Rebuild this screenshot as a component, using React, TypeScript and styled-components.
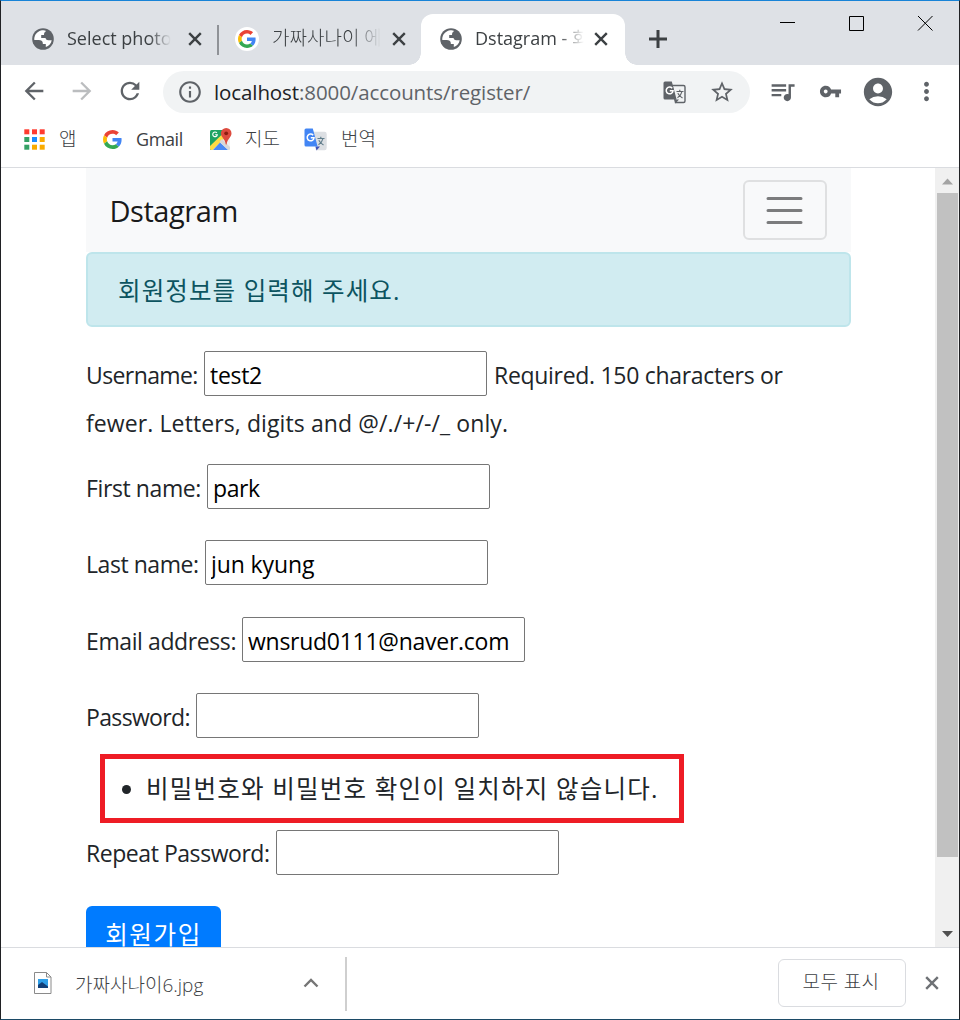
import React from 'react';
import styled, { createGlobalStyle } from 'styled-components';
import {
  MdArrowBack, MdArrowForward, MdRefresh, MdInfoOutline, MdStarBorder, MdVpnKey,
  MdAccountCircle, MdMoreVert, MdQueueMusic,
} from 'react-icons/md';

const Global = createGlobalStyle`
  *, *::before, *::after { box-sizing: border-box; }
  body { margin: 0; background: #fff; }
  input, button { font: inherit; }
`;

const latin = `'Open Sans', 'Noto Sans CJK KR', sans-serif`;

const Window = styled.div`
  width: 960px;
  height: 1020px;
  display: flex;
  flex-direction: column;
  overflow: hidden;
  background: #fff;
  border: 1px solid #202124;
  border-top-color: #1883d7;
  border-bottom-color: #1c4a66;
  font-family: ${latin};
`;

const Label = styled.span<{ $size: number; $ls?: number; $color?: string; $dy?: number; $weight?: number }>`
  display: inline-block;
  font-size: ${p => p.$size}px;
  letter-spacing: ${p => p.$ls ?? 0}px;
  color: ${p => p.$color ?? '#3c4043'};
  font-weight: ${p => p.$weight ?? 400};
  line-height: 30px;
  white-space: pre;
  transform: translateY(${p => p.$dy ?? 0}px);
`;

/* tab strip */
const TabStrip = styled.div`
  display: flex;
  height: 64px;
  background: #dee1e6;
  flex: none;
`;
const Tab = styled.div<{ $w: number; $active?: boolean; $pad: number }>`
  position: relative;
  display: flex;
  align-items: center;
  width: ${p => p.$w}px;
  height: 51px;
  margin-top: 13px;
  padding-left: ${p => p.$pad}px;
  padding-bottom: 1px;
  background: ${p => (p.$active ? '#fff' : 'transparent')};
  border-radius: 12px 12px 0 0;
  &::before, &::after {
    content: '';
    display: ${p => (p.$active ? 'block' : 'none')};
    position: absolute;
    bottom: 0;
    width: 12px;
    height: 12px;
  }
  &::before { left: -12px; background: radial-gradient(circle at 0 0, transparent 11.5px, #fff 12px); }
  &::after { right: -12px; background: radial-gradient(circle at 100% 0, transparent 11.5px, #fff 12px); }
`;
const TabTitle = styled.div<{ $w: number; $ml: number; $fade: number }>`
  width: ${p => p.$w}px;
  margin-left: ${p => p.$ml}px;
  height: 30px;
  overflow: hidden;
  mask-image: linear-gradient(to right, #000 calc(100% - ${p => p.$fade}px), transparent);
`;
const CloseIcon = styled.svg<{ $ml: number }>`
  flex: none;
  margin-left: ${p => p.$ml}px;
`;
const Divider = styled.div`
  width: 2px;
  height: 30px;
  margin-top: 24px;
  background: #8f9297;
`;
const White = styled.div`
  display: flex;
  align-items: center;
  justify-content: center;
  width: 24px;
  height: 24px;
  border-radius: 50%;
  background: #fff;
`;
const WindowButtons = styled.svg`margin-left: 109px;`;
const NewTab = styled.svg`margin: 28px 0 0 23px;`;

/* toolbar */
const Toolbar = styled.div`
  display: flex;
  align-items: center;
  height: 54px;
  flex: none;
  padding-left: 19px;
  color: #5f6368;
`;
const ToolIcon = styled.span<{ $ml?: number; $c?: string; $mb?: number }>`
  display: flex;
  flex: none;
  margin-left: ${p => p.$ml ?? 0}px;
  margin-bottom: ${p => p.$mb ?? 0}px;
  color: ${p => p.$c ?? '#5f6368'};
`;
const Omnibox = styled.div`
  display: flex;
  align-items: center;
  width: 587px;
  height: 42px;
  margin-left: 19px;
  padding-left: 14px;
  border-radius: 21px;
  background: #f1f3f4;
`;
const Url = styled.div`
  width: 449px;
  margin-left: 11px;
`;

/* bookmarks */
const Bookmarks = styled.div`
  display: flex;
  align-items: center;
  height: 49px;
  flex: none;
  padding: 0 0 7px 23px;
  border-bottom: 1px solid #dadce0;
`;
const Bookmark = styled.div<{ $w: number; $gap: number }>`
  display: flex;
  align-items: center;
  gap: ${p => p.$gap}px;
  width: ${p => p.$w}px;
  svg { flex: none; }
`;

/* page */
const Viewport = styled.div`
  display: flex;
  height: 779px;
  flex: none;
  overflow: hidden;
`;
const Page = styled.div`
  width: 934px;
  padding: 0 84px 0 85px;
  overflow: hidden;
`;
const Navbar = styled.nav`
  display: flex;
  align-items: center;
  justify-content: space-between;
  height: 84px;
  padding: 0 24px 0 23.5px;
  background: #f8f9fa;
`;
const Toggler = styled.button`
  display: flex;
  align-items: center;
  justify-content: center;
  width: 84px;
  height: 60px;
  padding: 0 1px 0 0;
  border: 2px solid #dfe0e1;
  border-radius: 6px;
  background: transparent;
`;
const Alert = styled.div`
  display: flex;
  align-items: center;
  height: 75px;
  padding-left: 30px;
  border: 2px solid #bee5eb;
  border-radius: 6px;
  background: #d1ecf1;
`;
const Row = styled.div<{ $mt: number }>`
  display: flex;
  align-items: center;
  height: 45px;
  margin-top: ${p => p.$mt}px;
`;
const FieldLabel = styled.label<{ $w: number }>`
  width: ${p => p.$w}px;
  height: 30px;
  flex: none;
  margin-top: 3px;
`;
const Field = styled.input<{ $ls: number }>`
  width: 283px;
  height: 45px;
  flex: none;
  padding: 3px 5px 0;
  border: 1px solid #767676;
  border-radius: 2px;
  outline: none;
  background: #fff;
  color: #000;
  font-size: 23px;
  letter-spacing: ${p => p.$ls}px;
`;
const Help = styled.div`
  height: 30px;
  margin: 3px 0 0 7px;
`;
const HelpNext = styled.div`
  height: 30px;
  margin-top: 13px;
`;
const ErrorBox = styled.ul`
  display: flex;
  align-items: center;
  width: 584px;
  height: 69px;
  margin: 16px 0 0 14px;
  padding: 0 0 0 17px;
  border: 5px solid #ee1c25;
  list-style: none;
`;
const ErrorItem = styled.li`
  display: flex;
  align-items: center;
  &::before {
    content: '';
    width: 9px;
    height: 9px;
    margin: 2px 15px 0 0;
    border-radius: 50%;
    background: #212529;
  }
`;
const Submit = styled.button`
  display: flex;
  justify-content: center;
  width: 135px;
  height: 57px;
  margin-top: 31px;
  padding: 14px 0 0;
  border: 0;
  border-radius: 6px;
  background: #007bff;
`;
const Scrollbar = styled.div`
  display: flex;
  flex-direction: column;
  justify-content: space-between;
  width: 24px;
  background: #f0f0f0;
`;
const Thumb = styled.div`
  width: 21px;
  height: 664px;
  margin: 0 0 0 2px;
  background: #c1c1c1;
`;
const ArrowBox = styled.div<{ $h: number }>`height: ${p => p.$h}px; display: flex;`;

/* download shelf */
const Shelf = styled.div`
  display: flex;
  align-items: center;
  flex: 1;
  padding: 0 0 1px 33px;
  border-top: 1px solid #dadce0;
`;
const FileName = styled.div`width: 228px; margin-left: 23px;`;
const ShelfRule = styled.div`width: 2px; height: 54px; margin: 2px 0 0 26px; background: #cfcfcf;`;
const ShowAll = styled.button`
  display: flex;
  align-items: center;
  justify-content: center;
  width: 128px;
  height: 48px;
  margin-left: 431px;
  padding: 0 2px 0 0;
  border: 1px solid #dadce0;
  border-radius: 6px;
  background: #fff;
`;

const Globe = () => (
  <svg width="22" height="22" viewBox="0 0 22 22">
    <circle cx="11" cy="11" r="10.8" fill="#5f6368" />
    <path fill="#fff" d="M11.4 2.2 C8 2.2 4.4 4.2 2.9 7.7 C2.3 9.2 2.1 10.6 2.3 12 L6.8 12 C9 12 10.8 13.2 10.8 15 L10.8 16 L13.8 16 L13.8 18.9 C16.8 18 19.3 15.3 19.7 12.2 L16.3 12.2 C14.5 12.2 13.6 11.2 13.6 10 L9.2 10 L9.2 6.9 L12 6.9 C12 5 12.7 3.8 14.2 3 C13.3 2.4 12.4 2.2 11.4 2.2Z" />
  </svg>
);

const Google = ({ s = 18 }: { s?: number }) => (
  <svg width={s} height={s} viewBox="0 0 48 48">
    <path fill="#EA4335" d="M24 9.5c3.54 0 6.71 1.22 9.21 3.6l6.85-6.85C35.9 2.38 30.47 0 24 0 14.62 0 6.51 5.38 2.56 13.22l7.98 6.19C12.43 13.72 17.74 9.5 24 9.5z" />
    <path fill="#4285F4" d="M46.98 24.55c0-1.57-.15-3.09-.38-4.55H24v9.02h12.94c-.58 2.96-2.26 5.48-4.78 7.18l7.73 6c4.51-4.18 7.09-10.36 7.09-17.65z" />
    <path fill="#FBBC05" d="M10.53 28.59c-.48-1.45-.76-2.99-.76-4.59s.27-3.14.76-4.59l-7.98-6.19C.92 16.46 0 20.12 0 24c0 3.88.92 7.54 2.56 10.78l7.97-6.19z" />
    <path fill="#34A853" d="M24 48c6.48 0 11.93-2.13 15.89-5.81l-7.73-6c-2.15 1.45-4.92 2.3-8.16 2.3-6.26 0-11.57-4.22-13.47-9.91l-7.98 6.19C6.51 42.62 14.62 48 24 48z" />
  </svg>
);

const Close = ({ ml, c = '#3c4043' }: { ml: number; c?: string }) => (
  <CloseIcon $ml={ml} width="14" height="14" viewBox="0 0 14 14" stroke={c} strokeWidth="2.4">
    <path d="M1.2 1.2L12.8 12.8M12.8 1.2L1.2 12.8" />
  </CloseIcon>
);

const TranslateGlyph = ({ color }: { color?: boolean }) => (
  <svg width="23" height="23" viewBox="0 0 23 23" fill="none">
    <path d="M9 4.5H20.5A1.5 1.5 0 0 1 22 6V20A1.5 1.5 0 0 1 20.5 21.5H12.5L9 4.5Z" fill={color ? '#dcdfe3' : '#f1f3f4'} stroke={color ? '#dcdfe3' : '#5f6368'} strokeWidth="1.4" />
    <path d="M11.5 18.5L12.5 22.5L16 18.5Z" fill={color ? '#3f51b5' : '#5f6368'} />
    <path d="M2 .5H8.8L13.6 18.5H2A1.5 1.5 0 0 1 .5 17V2A1.5 1.5 0 0 1 2 .5Z" fill={color ? '#4285f4' : '#5f6368'} />
    <path d="M9.2 7.2A3.4 3.4 0 1 0 10 9.8H6.8" stroke="#fff" strokeWidth="1.5" />
    <path d="M13.5 10.5H20.5M16.8 8.7V10.5M19 10.5C18.5 13 17 15 14.5 16.8M14.8 12.2C15.8 14 17.5 15.8 19.5 17" stroke={color ? '#607d8b' : '#5f6368'} strokeWidth="1.2" />
  </svg>
);

const Maps = () => (
  <svg width="24" height="23" viewBox="0 0 24 23">
    <rect x="1" y="2" width="20" height="20" rx="1.5" fill="#f1f1f1" />
    <path d="M2.5 2H16L15 9L2 22Q1 21.5 1 20.5V3.5Q1 2 2.5 2Z" fill="#1ea362" />
    <path d="M1 18L14 5.5L17 9L3.5 22H2.5Q1 21.8 1 20.5Z" fill="#fedc45" />
    <path d="M4 22L11 14.5L19 22Z" fill="#4a89f3" />
    <path d="M13 11L21 19V20.5Q21 22 19.5 22L10.5 13.5Z" fill="#d8d8d8" />
    <path d="M7.9 5A2.3 2.3 0 1 0 8.3 6.8H6.2" fill="none" stroke="#fff" strokeWidth="1.1" />
    <path d="M17.2 0A5.3 5.3 0 0 1 22.5 5.3C22.5 9.4 18.3 10.8 17.6 16.5H16.8C16.1 10.8 11.9 9.4 11.9 5.3A5.3 5.3 0 0 1 17.2 0Z" fill="#dd4b3e" />
    <circle cx="17.2" cy="5.3" r="1.9" fill="#8c1c10" />
  </svg>
);

const appColors = ['#ff3b30', '#ff3b30', '#ff3b30', '#34a165', '#1a8cff', '#f9ab00', '#34a165', '#f9ab00', '#f9ab00'];

const fields = [
  { label: 'First name:', w: 121, ls: -0.4, value: 'park', vls: -0.4, mt: 25 },
  { label: 'Last name:', w: 119, ls: -0.45, value: 'jun kyung', vls: -0.1, mt: 31 },
  { label: 'Email address:', w: 156, ls: -0.4, value: 'wnsrud0111@naver.com', vls: -0.27, mt: 32 },
  { label: 'Password:', w: 110, ls: -0.65, value: '', vls: 0, mt: 31 },
];
const ink = '#212529';

export default function App() {
  return (
    <Window>
      <Global />
      <TabStrip>
        <Tab $w={216} $pad={31}>
          <Globe />
          <TabTitle $w={104} $ml={13} $fade={22}><Label $size={18} $dy={-1}>Select photo</Label></TabTitle>
          <Close ml={17} />
        </Tab>
        <Divider />
        <Tab $w={202} $pad={16}>
          <White><Google /></White>
          <TabTitle $w={109} $ml={13} $fade={28}><Label $size={19} $weight={300} $dy={-1}>가짜사나이 에</Label></TabTitle>
          <Close ml={11} />
        </Tab>
        <Tab $w={204} $pad={19} $active>
          <Globe />
          <TabTitle $w={109} $ml={13} $fade={26}><Label $size={18} $dy={-1}>Dstagram - 회</Label></TabTitle>
          <Close ml={10} />
        </Tab>
        <NewTab width="20" height="20" viewBox="0 0 20 20" stroke="#3c4043" strokeWidth="3"><path d="M1 10H19M10 1V19" /></NewTab>
        <WindowButtons width="180" height="40" viewBox="0 0 180 40" fill="none" stroke="#000" strokeWidth="1">
          <path d="M3 21.5H18M72.5 15.5H86.5V29.5H72.5Z" />
          <path d="M141 15L155.5 29.5M155.5 15L141 29.5" />
        </WindowButtons>
      </TabStrip>

      <Toolbar>
        <ToolIcon $mb={2}><MdArrowBack size={28} /></ToolIcon>
        <ToolIcon $ml={20} $mb={2} $c="#bbbdbf"><MdArrowForward size={28} /></ToolIcon>
        <ToolIcon $ml={20} $mb={2}><MdRefresh size={28} /></ToolIcon>
        <Omnibox>
          <ToolIcon><MdInfoOutline size={26} /></ToolIcon>
          <Url>
            <Label $size={20.5} $ls={-0.1} $color="#202124">localhost</Label>
            <Label $size={20.5} $ls={-0.1} $color="#5f6368">:8000/accounts/register/</Label>
          </Url>
          <ToolIcon><TranslateGlyph /></ToolIcon>
          <ToolIcon $ml={23}><MdStarBorder size={26} /></ToolIcon>
        </Omnibox>
        <ToolIcon $ml={18} $mb={2}><MdQueueMusic size={29} /></ToolIcon>
        <ToolIcon $ml={22} $mb={2}><MdVpnKey size={23} /></ToolIcon>
        <ToolIcon $ml={19} $mb={1}><MdAccountCircle size={34} /></ToolIcon>
        <ToolIcon $ml={17} $mb={1}><MdMoreVert size={29} /></ToolIcon>
      </Toolbar>

      <Bookmarks>
        <Bookmark $w={79} $gap={14}>
          <svg width="21" height="21" viewBox="0 0 21 21">
            {appColors.map((c, i) => <rect key={i} x={(i % 3) * 7.7 + 0.3} y={Math.floor(i / 3) * 7.7 + 0.3} width="5" height="5" fill={c} />)}
          </svg>
          <Label $size={19} $weight={300} $dy={-1}>앱</Label>
        </Bookmark>
        <Bookmark $w={106} $gap={14}><Google s={19} /><Label $size={18} $ls={-0.4} $dy={-1}>Gmail</Label></Bookmark>
        <Bookmark $w={95} $gap={12}><Maps /><Label $size={19} $weight={300} $dy={-1}>지도</Label></Bookmark>
        <Bookmark $w={90} $gap={14}><TranslateGlyph color /><Label $size={19} $weight={300} $dy={-1}>번역</Label></Bookmark>
      </Bookmarks>

      <Viewport>
        <Page>
          <Navbar>
            <Label $size={29} $ls={-0.45} $dy={1} $color="#191a1b">Dstagram</Label>
            <Toggler>
              <svg width="45" height="45" viewBox="0 0 30 30"><path stroke="#7b7c7d" strokeLinecap="round" strokeWidth="2" d="M4 7h22M4 15h22M4 23h22" /></svg>
            </Toggler>
          </Navbar>
          <Alert><Label $size={24.5} $ls={1.1} $dy={1} $color="#0c5460">회원정보를 입력해 주세요.</Label></Alert>

          <Row $mt={24}>
            <FieldLabel $w={118}><Label $size={23} $ls={-0.6} $color={ink}>Username:</Label></FieldLabel>
            <Field $ls={-0.3} defaultValue="test2" />
            <Help><Label $size={23} $ls={-0.3} $color={ink}>Required. 150 characters or</Label></Help>
          </Row>
          <HelpNext><Label $size={23} $ls={0.1} $dy={-1} $color={ink}>fewer. Letters, digits and @/./+/-/_ only.</Label></HelpNext>
          {fields.map((f, i) => (
            <Row key={i} $mt={f.mt}>
              <FieldLabel $w={f.w}><Label $size={23} $ls={f.ls} $color={ink}>{f.label}</Label></FieldLabel>
              <Field $ls={f.vls} defaultValue={f.value} />
            </Row>
          ))}
          <ErrorBox>
            <ErrorItem><Label $size={24.5} $ls={1.2} $color={ink}>비밀번호와 비밀번호 확인이 일치하지 않습니다.</Label></ErrorItem>
          </ErrorBox>
          <Row $mt={7}>
            <FieldLabel $w={190}><Label $size={23} $ls={-0.45} $dy={-1} $color={ink}>Repeat Password:</Label></FieldLabel>
            <Field $ls={0} defaultValue="" />
          </Row>
          <Submit><Label $size={24.5} $ls={1.6} $color="#fff">회원가입</Label></Submit>
        </Page>
        <Scrollbar>
          <ArrowBox $h={25}><svg width="24" height="25"><path d="M7 16.5L12.5 10.5L18 16.5Z" fill="#a3a3a3" /></svg></ArrowBox>
          <Thumb />
          <ArrowBox $h={90}><svg width="24" height="90"><path d="M7 74L12.5 80L18 74Z" fill="#505050" /></svg></ArrowBox>
        </Scrollbar>
      </Viewport>

      <Shelf>
        <svg width="18" height="22" viewBox="0 0 18 22">
          <path d="M.5 .5H12.5L17 5V21.5H.5Z" fill="#fff" stroke="#8a8a8a" />
          <path d="M12.5 .5V5H17" fill="none" stroke="#8a8a8a" />
          <rect x="4" y="7" width="10" height="9" fill="#2f9fe8" />
          <path d="M4 13L8 10L14 14.5V16H4Z" fill="#123f78" />
        </svg>
        <FileName><Label $size={19} $weight={300} $dy={2}>가짜사나이6.jpg</Label></FileName>
        <svg width="16" height="10" viewBox="0 0 16 10" fill="none" stroke="#757575" strokeWidth="2.4"><path d="M1.5 8.5L8 2L14.5 8.5" /></svg>
        <ShelfRule />
        <ShowAll><Label $size={19} $weight={300} $ls={0.4} $dy={-1}>모두 표시</Label></ShowAll>
        <Close ml={19} c="#6e7175" />
      </Shelf>
    </Window>
  );
}
